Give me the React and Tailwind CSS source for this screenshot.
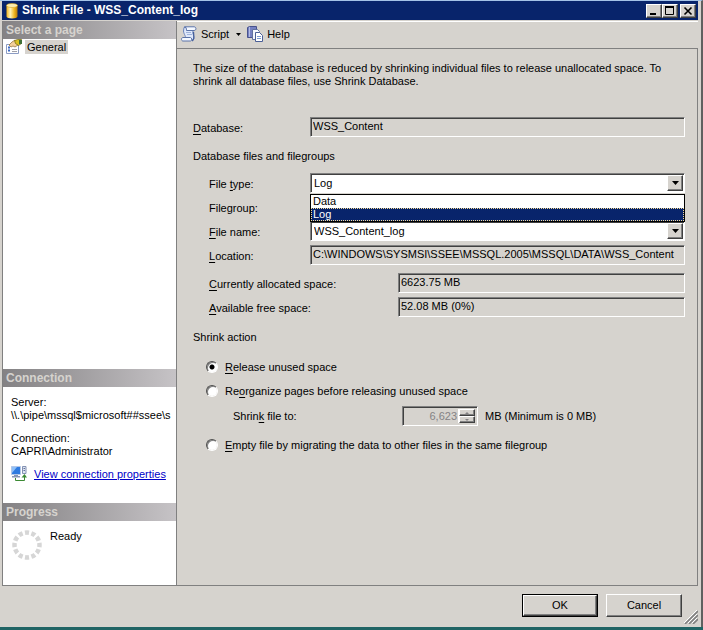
import React, { useState } from 'react';

const BEVEL =
  'border border-t-white border-l-white border-r-[#404040] border-b-[#404040] shadow-[inset_-1px_-1px_0_#808080]';
const SUNKEN =
  'border border-t-[#808080] border-l-[#808080] border-r-white border-b-white shadow-[inset_1px_1px_0_#404040]';

const Key = ({ children }) => <span className="underline underline-offset-2">{children}</span>;

const DatabaseIcon = () => (
  <svg width="12" height="16" viewBox="0 0 12 16" aria-hidden="true">
    <defs>
      <linearGradient id="gold" x1="0" x2="1">
        <stop offset="0" stopColor="#f4b41a" />
        <stop offset="0.35" stopColor="#fff3b8" />
        <stop offset="0.7" stopColor="#f2b822" />
        <stop offset="1" stopColor="#b87a08" />
      </linearGradient>
    </defs>
    <path d="M0.5 2.5v11c0 1.2 2.4 2 5.5 2s5.5-.8 5.5-2v-11z" fill="url(#gold)" />
    <ellipse cx="6" cy="2.5" rx="5.5" ry="2" fill="#fdeeb0" stroke="#d9a520" strokeWidth="0.6" />
  </svg>
);

const PropertiesIcon = () => (
  <svg width="16" height="16" viewBox="0 0 16 16" aria-hidden="true">
    <path d="M0.5 5.5h12v9h-12z" fill="#fff" stroke="#8c9cc4" />
    <path d="M2 8.5h2M2 11.5h2" stroke="#3c6ac4" strokeWidth="2" />
    <path d="M6 10.5h5M6 12.5h5" stroke="#a0a0a8" />
    <path d="M3 6l3-3 3-2 2 2 1 3-3 2-2-1-2 1z" fill="#f3cf9a" stroke="#8a6a30" strokeWidth="0.7" />
    <path d="M8.5 1.5l3-1h4v4l-3 2-3-2z" fill="#d8c020" stroke="#6d6410" strokeWidth="0.7" />
    <path d="M13 1h3v4h-3z" fill="#3f7038" />
  </svg>
);

const ScriptIcon = () => (
  <svg width="16" height="16" viewBox="0 0 16 16" aria-hidden="true">
    <path d="M3 1.5h10L12 5c-1 2 1.500 5 1 8l-2 1H4c2-3-1.500-6-1.500-9z" fill="#dfe8fa" stroke="#6c84bc" />
    <path d="M3.500 0.800h9.500c2.600 0 2.600 3.700 0 3.700H5.500c0-2-.5-3.700-2-3.700z" fill="#f4f8ff" stroke="#5b73a8" />
    <path d="M2 11.500h7.500c1.500 0 1.500 3.500 0 3.500H2c-2 0-2-3.500 0-3.500z" fill="#f4f8ff" stroke="#5b73a8" />
    <path d="M5 6.500h5M6 8.500h5" stroke="#9fb3dc" />
    <path d="M12.500 6c0 3 1.500 8-1.500 9" fill="none" stroke="#46609c" strokeWidth="1.300" />
  </svg>
);

const HelpIcon = () => (
  <svg width="16" height="16" viewBox="0 0 16 16" aria-hidden="true">
    <path d="M0.5 1.5l2-1h7v11h-9z" fill="#7681c2" stroke="#48528c" />
    <path d="M2.500 1v10" stroke="#b4bce4" />
    <path d="M5.500 3.500h5l2 2v8h-7z" fill="#f4f7fd" stroke="#62719f" />
    <path d="M8.500 6.500h4l3 3v6h-7z" fill="#fff" stroke="#4a5f97" />
    <path d="M10 10.500h4M10 12.500h4" stroke="#7b98cf" />
  </svg>
);

const ConnectionIcon = () => (
  <svg width="16" height="16" viewBox="0 0 16 16" aria-hidden="true">
    <path d="M0.5 0.5h9v8h-9z" fill="#2f7be0" stroke="#b4c8e8" />
    <path d="M1 1h5L1 7z" fill="#8fc0f8" />
    <path d="M3 9h4v1H3zM1 10h8v1.500H1z" fill="#8796b5" />
    <path d="M11.500 0.500h3.500v7h-3.500z" fill="#dfe5f1" stroke="#8492b2" />
    <path d="M12.500 2.500h1.500M12.500 4.500h1.500" stroke="#62719f" />
    <path d="M4.500 12v2.500h9V10" fill="none" stroke="#3c8a34" />
    <path d="M10.500 11.500l3-3.500 2.500 3.500z" fill="#3c8a34" />
  </svg>
);

const Spinner = () => (
  <svg width="30" height="30" viewBox="0 0 30 30" aria-hidden="true">
    <circle
      cx="15"
      cy="15"
      r="12.5"
      fill="none"
      stroke="#d6d6d6"
      strokeWidth="4.500"
      pathLength="12"
      strokeDasharray="0.640 0.360"
      strokeDashoffset="0.320"
    />
  </svg>
);

const Arrow = ({ small }) => (
  <svg width={small ? 5 : 7} height={small ? 3 : 4} viewBox="0 0 7 4" aria-hidden="true">
    <path d="M0 0h7L3.500 4z" fill="currentColor" />
  </svg>
);

const PanelTitle = ({ children }) => (
  <h2 className="h-[18px] shrink-0 bg-linear-to-r from-[#848284] to-[#c6c3c6] pl-[3px] text-[12px] leading-[18px] font-bold text-[#d6d3ce]">
    {children}
  </h2>
);

const ReadOnly = ({ id, value }) => (
  <input
    id={id}
    readOnly
    value={value}
    className={`h-5 w-full min-w-0 bg-[#d6d3ce] px-[2px] pb-[2px] outline-none ${SUNKEN}`}
  />
);

const Combo = ({ id, value, options, onChange }) => (
  <div className={`grid h-5 bg-white p-px ${SUNKEN}`}>
    <select
      id={id}
      value={value}
      onChange={onChange}
      className="col-start-1 row-start-1 w-full appearance-none pl-[2px] leading-4 outline-none"
    >
      {options.map((option) => (
        <option key={option}>{option}</option>
      ))}
    </select>
    <span
      className={`pointer-events-none col-start-1 row-start-1 flex w-4 items-center justify-center justify-self-end bg-[#d6d3ce] ${BEVEL}`}
    >
      <Arrow />
    </span>
  </div>
);

const Row = ({ id, label, wide, children }) => (
  <div className={wide ? 'grid h-6 grid-cols-[189px_1fr]' : 'grid h-6 grid-cols-[101px_1fr]'}>
    <label htmlFor={id} className="pt-[5px] whitespace-nowrap">
      {label}
    </label>
    <div className="relative min-w-0">{children}</div>
  </div>
);

const Radio = ({ value, action, setAction, children }) => (
  <label className="flex h-6 items-center gap-[7px]">
    <input
      type="radio"
      name="action"
      value={value}
      checked={action === value}
      onChange={() => setAction(value)}
      className="size-3 appearance-none rounded-full border border-t-[#505050] border-l-[#505050] border-r-white border-b-white bg-white bg-clip-padding shadow-[inset_1px_1px_0_#808080] checked:bg-[radial-gradient(circle,#000_2px,#fff_3px)]"
    />
    <span>{children}</span>
  </label>
);

const TitleButton = ({ label, children }) => (
  <button aria-label={label} className={`flex h-[14px] w-4 items-center justify-center bg-[#d6d3ce] ${BEVEL}`}>
    <svg width="10" height="10" viewBox="0 0 10 10" fill="none" stroke="#000">
      {children}
    </svg>
  </button>
);

const App = () => {
  const [action, setAction] = useState('release');
  const [fileType, setFileType] = useState('Log');

  return (
    <div className="flex min-h-screen flex-col border-b-3 border-[#206464] bg-[#d6d3ce] font-['Liberation_Sans',Arial,sans-serif] text-[11px] leading-[13px] text-black">
      <div className="flex grow flex-col border-t border-r-2 border-t-[#a5c3e7] border-r-[#606060] pr-[3px] pl-[2px]">
        <header className="flex h-[19px] items-center bg-[#08246b] pr-[2px] pl-1">
          <DatabaseIcon />
          <h1 className="ml-1 grow text-[12px] font-bold text-white">Shrink File - WSS_Content_log</h1>
          <TitleButton label="Minimize">
            <path d="M1 8h6" strokeWidth="2" />
          </TitleButton>
          <TitleButton label="Maximize">
            <path d="M0.5 1.5h8v7h-8z" />
            <path d="M0 1h9" strokeWidth="2" />
          </TitleButton>
          <span className="w-[2px]" />
          <TitleButton label="Close">
            <path d="M1.500 1.500l7 7M8.500 1.500l-7 7" strokeWidth="1.600" />
          </TitleButton>
        </header>

        <div className="mt-px flex grow border-b border-[#808080]">
          <aside className="flex w-[175px] shrink-0 flex-col border-x border-[#808080] bg-white">
            <PanelTitle>Select a page</PanelTitle>
            <div className="flex grow items-start gap-[3px] pl-[3px]">
              <PropertiesIcon />
              <button className="mt-px h-[14px] bg-[#d6d3ce] px-[2px]">General</button>
            </div>

            <PanelTitle>Connection</PanelTitle>
            <div className="h-[116px] pt-[9px] pl-[8px] whitespace-nowrap">
              <p>Server:</p>
              <p>{'\\\\.\\pipe\\mssql$microsoft##ssee\\s'}</p>
              <p className="mt-[10px]">Connection:</p>
              <p>CAPRI\Administrator</p>
              <div className="mt-2 flex items-center gap-[7px]">
                <ConnectionIcon />
                <a href="#properties" className="text-[#0000c8] underline">
                  View connection properties
                </a>
              </div>
            </div>

            <PanelTitle>Progress</PanelTitle>
            <div className="flex h-16 items-start gap-2 pt-[9px] pl-[9px]">
              <Spinner />
              <span>Ready</span>
            </div>
          </aside>

          <main className="flex min-w-0 grow flex-col">
            <div className="flex h-[27px] shrink-0 items-center border-t border-white pb-[2px] pl-1">
              <button className="flex items-center gap-1">
                <ScriptIcon />
                Script
                <span className="ml-[3px]">
                  <Arrow small />
                </span>
              </button>
              <button className="ml-[6px] flex items-center gap-1">
                <HelpIcon />
                Help
              </button>
            </div>

            <form className="grow border-t border-r border-[#808080] pt-[13px] pr-3 pl-4" onSubmit={(e) => e.preventDefault()}>
              <p className="pr-4">
                The size of the database is reduced by shrinking individual files to release unallocated space. To shrink all database files, use Shrink Database.
              </p>

              <div className="mt-[29px] grid grid-cols-[117px_1fr]">
                <label htmlFor="database" className="pt-[5px]">
                  <Key>D</Key>atabase:
                </label>
                <ReadOnly id="database" value="WSS_Content" />
              </div>

              <h3 className="mt-[13px]">Database files and filegroups</h3>
              <div className="mt-[10px] pl-4">
                <Row id="type" label={<>File <Key>t</Key>ype:</>}>
                  <Combo
                    id="type"
                    value={fileType}
                    options={['Data', 'Log']}
                    onChange={(e) => setFileType(e.target.value)}
                  />
                  <ul role="listbox" aria-label="File type" className="absolute inset-x-0 top-[21px] z-10 border border-black bg-white">
                    <li role="option" aria-selected={false} className="px-[2px]">
                      Data
                    </li>
                    <li
                      role="option"
                      aria-selected
                      className="bg-[#08246b] px-[2px] text-white outline-1 -outline-offset-1 outline-dotted outline-[#f7db94]"
                    >
                      Log
                    </li>
                  </ul>
                </Row>
                <Row label="Filegroup:" />
                <Row id="name" label={<><Key>F</Key>ile name:</>}>
                  <Combo id="name" value="WSS_Content_log" options={['WSS_Content_log']} onChange={() => {}} />
                </Row>
                <Row id="location" label={<><Key>L</Key>ocation:</>}>
                  <ReadOnly id="location" value="C:\WINDOWS\SYSMSI\SSEE\MSSQL.2005\MSSQL\DATA\WSS_Content" />
                </Row>
                <div className="mt-1">
                  <Row wide id="allocated" label={<><Key>C</Key>urrently allocated space:</>}>
                    <ReadOnly id="allocated" value="6623.75 MB" />
                  </Row>
                  <Row wide id="free" label={<><Key>A</Key>vailable free space:</>}>
                    <ReadOnly id="free" value="52.08 MB (0%)" />
                  </Row>
                </div>
              </div>

              <h3 className="mt-[10px]">Shrink action</h3>
              <div className="mt-[11px] pl-[13px]">
                <Radio value="release" action={action} setAction={setAction}>
                  <Key>R</Key>elease unused space
                </Radio>
                <Radio value="reorganize" action={action} setAction={setAction}>
                  Re<Key>o</Key>rganize pages before releasing unused space
                </Radio>
                <div className="mb-1 flex h-[26px] items-center pl-[27px]">
                  <label htmlFor="target" className="w-[169px]">
                    Shrin<Key>k</Key> file to:
                  </label>
                  <div className={`flex h-5 w-[76px] p-[2px] ${SUNKEN}`}>
                    <input
                      id="target"
                      disabled
                      value="6,623"
                      readOnly
                      className="w-0 min-w-0 grow border-r border-white bg-[#d6d3ce] pr-px text-right text-[#848284]"
                    />
                    <div className="flex w-4 flex-col text-[#848284]">
                      <button disabled aria-label="Increase" className={`flex h-2 items-center justify-center ${BEVEL}`}>
                        <svg width="4" height="2" viewBox="0 0 4 2">
                          <path d="M0 2h4L2 0z" fill="currentColor" />
                        </svg>
                      </button>
                      <button disabled aria-label="Decrease" className={`flex h-2 items-center justify-center ${BEVEL}`}>
                        <svg width="4" height="2" viewBox="0 0 4 2">
                          <path d="M0 0h4L2 2z" fill="currentColor" />
                        </svg>
                      </button>
                    </div>
                  </div>
                  <span className="ml-[7px]">MB (Minimum is 0 MB)</span>
                </div>
                <Radio value="empty" action={action} setAction={setAction}>
                  <Key>E</Key>mpty file by migrating the data to other files in the same filegroup
                </Radio>
              </div>
            </form>
          </main>
        </div>

        <footer className="flex h-[41px] items-start justify-end pt-2">
          <button className="h-[23px] w-[76px] border border-black p-0">
            <span className={`flex size-full items-center justify-center ${BEVEL}`}>OK</span>
          </button>
          <button className={`ml-2 h-[23px] w-[76px] ${BEVEL}`}>Cancel</button>
          <svg width="14" height="14" viewBox="0 0 14 14" className="mt-4 ml-[2px]" aria-hidden="true">
            <path d="M1 14L14 1M5 14l9-9M9 14l5-5" stroke="#808080" strokeWidth="1.600" />
            <path d="M0 13L13 0M4 13l9-9M8 13l5-5" stroke="#fff" />
          </svg>
        </footer>
      </div>
    </div>
  );
};

export default App;
